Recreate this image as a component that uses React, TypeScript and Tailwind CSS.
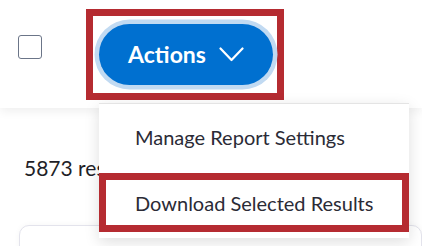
import React from "react";

const Chevron: React.FC = () => (
  <svg width="25" height="15" viewBox="0 0 25 15" fill="none">
    <polyline points="1.5,1.5 12.5,13 23.5,1.5" stroke="white" strokeWidth="2.2" strokeLinecap="round" strokeLinejoin="round" />
  </svg>
);

const App: React.FC = () => (
  <div className="relative w-[422px] h-[246px] overflow-hidden bg-white font-['Lato','Noto_Sans',sans-serif]">
    <header className="relative z-10 h-[108px] bg-white flex items-center pl-[18px] shadow-[0_3px_10px_rgba(0,0,0,0.07)]">
      <div className="w-[24px] h-[24px] mb-[14px] rounded-[3px] border-[1.5px] border-[#6b7588] bg-white" />
      <div className="ml-[44px] w-[198px] h-[91px] border-[7px] border-[#b52b31] flex items-center justify-center">
        <button className="ml-[2px] w-[174px] h-[61px] rounded-full bg-[#0070d0] shadow-[0_0_0_4.5px_#c1daf2] flex items-center justify-center gap-[13px] text-white font-bold text-[23px]">
          <span>Actions</span>
          <Chevron />
        </button>
      </div>
    </header>

    <main className="pt-[48px] pl-[24px] pr-0">
      <p className="text-[21px] leading-[24px] text-[#1f1f28]">5873 results</p>
      <div className="mt-[45px] ml-[-5px] h-[40px] rounded-t-[10px] border border-[#e3e3ec] bg-white shadow-[0_0_6px_rgba(0,0,0,0.04)]" />
    </main>

    <div className="absolute left-[99px] top-[103px] z-20 w-[310px] bg-white border-t border-[#e4e4e4] shadow-[0_4px_14px_rgba(0,0,0,0.13)] text-[20px] text-[#2b2b36]">
      <div className="h-[66px] flex items-center pl-[36px]">Manage Report Settings</div>
      <div className="pt-[3px] pb-[6px]">
        <div className="h-[59px] border-[7px] border-[#b52b31] flex items-center pl-[29px]">Download Selected Results</div>
      </div>
    </div>
  </div>
);

export default App;
